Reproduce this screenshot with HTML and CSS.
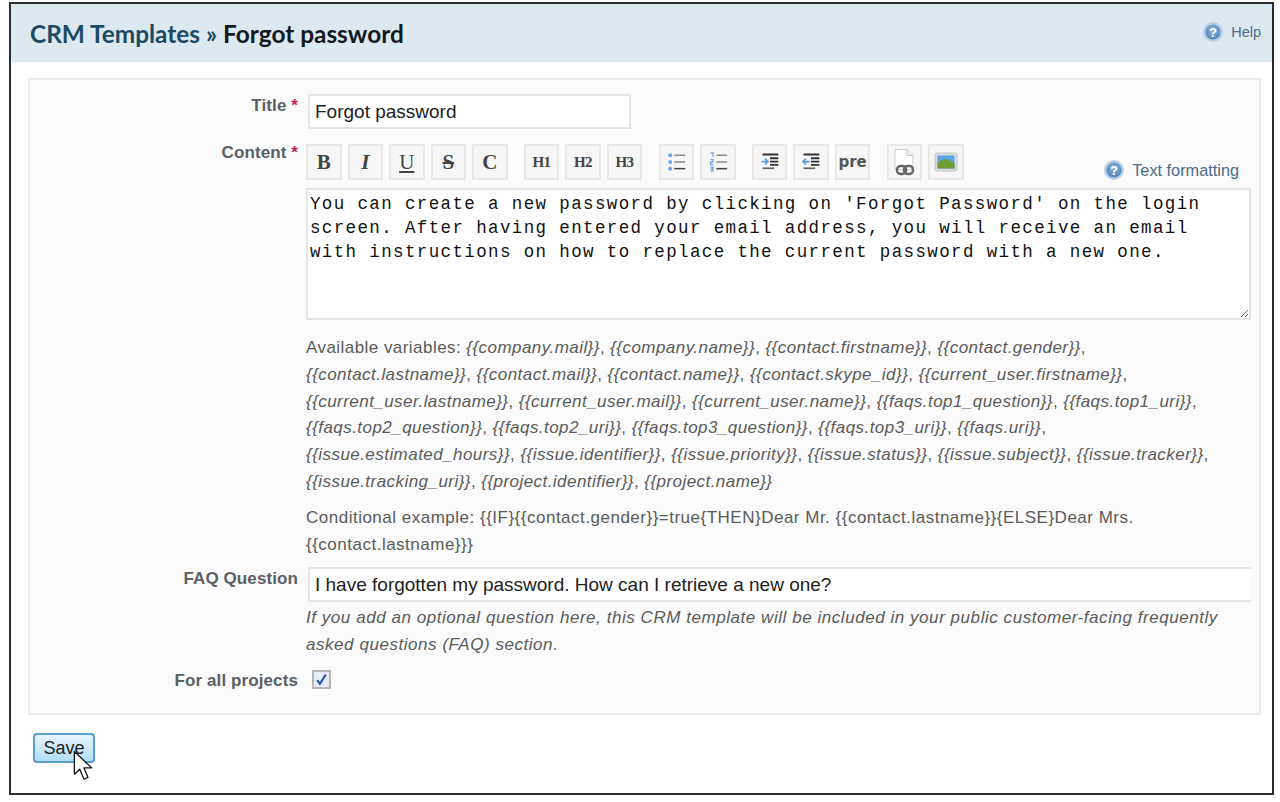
FILE: index.html
```html
<!DOCTYPE html>
<html lang="en">
<head>
<meta charset="utf-8">
<title>CRM Templates » Forgot password</title>
<link rel="stylesheet" href="styles.css">
</head>
<body>
<div class="frame">
  <header class="header">
    <h1 class="title"><a class="crumb">CRM Templates</a> <span class="crumb">»</span> Forgot password</h1>
    <a class="help-link help-top">
      <svg class="help-icon" viewBox="0 0 22 22"><defs><radialGradient id="hg" cx="50%" cy="40%" r="60%"><stop offset="0" stop-color="#8fb6dc"/><stop offset="1" stop-color="#4f83b8"/></radialGradient></defs><circle cx="11" cy="11" r="10" fill="#b9cfe4"/><circle cx="11" cy="11" r="7.6" fill="url(#hg)"/><text x="11" y="15.5" text-anchor="middle" class="help-q">?</text></svg>
      <span>Help</span>
    </a>
  </header>
  <form class="panel">
    <div class="row row-title">
      <label class="label">Title <span class="req">*</span></label>
      <div class="field"><input class="input input-title" type="text" value="Forgot password"></div>
    </div>
    <div class="row row-content">
      <label class="label label-content">Content <span class="req">*</span></label>
      <div class="field">
        <div class="toolbar">
          <div class="group">
            <span class="tb tb-b">B</span><span class="tb tb-i">I</span><span class="tb tb-u">U</span><span class="tb tb-s">S</span><span class="tb tb-c">C</span>
          </div>
          <div class="group">
            <span class="tb tb-h">H1</span><span class="tb tb-h">H2</span><span class="tb tb-h">H3</span>
          </div>
          <div class="group">
            <span class="tb"><svg class="ico" viewBox="0 0 24 24"><g fill="#6aa4e4"><circle cx="5" cy="4" r="2.4"/><circle cx="5" cy="12" r="2.4"/><circle cx="5" cy="20" r="2.4"/></g><path d="M10 4h13M10 12h13" stroke="#8a8a8a" stroke-width="1.8"/><path d="M10 20h13" stroke="#444" stroke-width="1.8"/></svg></span>
            <span class="tb"><svg class="ico" viewBox="0 0 24 24"><path d="M3 1h3v5M3 9h3v3h-3v3h3M3 18h3v5h-3M3 20.500h3" stroke="#6aa4e4" stroke-width="1.500" fill="none"/><path d="M10 4h13M10 12h13" stroke="#8a8a8a" stroke-width="1.8"/><path d="M10 20h13" stroke="#444" stroke-width="1.8"/></svg></span>
          </div>
          <div class="group">
            <span class="tb"><svg class="ico" viewBox="0 0 24 24"><path d="M3 3h19M12 7.500h10M12 11.500h10M12 15.500h10" stroke="#333" stroke-width="2.200"/><path d="M3 19.500h14" stroke="#666" stroke-width="2"/><path d="M2 11.500h7M6 8l3.500 3.500L6 15" stroke="#5b9ee6" stroke-width="2" fill="none"/></svg></span>
            <span class="tb"><svg class="ico" viewBox="0 0 24 24"><path d="M3 3h19M12 7.500h10M12 11.500h10M12 15.500h10" stroke="#333" stroke-width="2.200"/><path d="M3 19.500h14" stroke="#666" stroke-width="2"/><path d="M3.500 11.500h7M6 8l-3.500 3.500L6 15" stroke="#5b9ee6" stroke-width="2" fill="none"/></svg></span>
            <span class="tb tb-pre">pre</span>
          </div>
          <div class="group">
            <span class="tb"><svg class="ico ico-lg" viewBox="0 0 28 28"><path d="M5 1.500h12l6 6v14H5z" fill="#fff" stroke="#c9c9c9"/><path d="M17 1.500v6h6" fill="#eee" stroke="#c9c9c9"/><rect x="7" y="18" width="9" height="8" rx="3.500" fill="none" stroke="#666" stroke-width="2.400"/><rect x="14" y="18" width="9" height="8" rx="3.500" fill="none" stroke="#666" stroke-width="2.400"/></svg></span>
            <span class="tb"><svg class="ico ico-lg" viewBox="0 0 28 28"><rect x="3" y="5" width="22" height="18" rx="2" fill="#dcdcdc" stroke="#c4c4c4"/><rect x="5.500" y="7.500" width="17" height="13" fill="#5aa6e6"/><path d="M5.500 20.500v-6c4-3 7-4 10-3s5 2 7 4v5z" fill="#6d9e35"/></svg></span>
          </div>
          <a class="help-link help-format">
            <svg class="help-icon" viewBox="0 0 22 22"><circle cx="11" cy="11" r="10" fill="#b9cfe4"/><circle cx="11" cy="11" r="7.6" fill="url(#hg)"/><text x="11" y="15.5" text-anchor="middle" class="help-q">?</text></svg>
            <span>Text formatting</span>
          </a>
        </div>
        <textarea class="textarea" spellcheck="false">You can create a new password by clicking on 'Forgot Password' on the login screen. After having entered your email address, you will receive an email with instructions on how to replace the current password with a new one.</textarea>
        <p class="note note-vars">Available variables: <em>{{company.mail}}</em>, <em>{{company.name}}</em>, <em>{{contact.firstname}}</em>, <em>{{contact.gender}}</em>, <em>{{contact.lastname}}</em>, <em>{{contact.mail}}</em>, <em>{{contact.name}}</em>, <em>{{contact.skype_id}}</em>, <em>{{current_user.firstname}}</em>, <em>{{current_user.lastname}}</em>, <em>{{current_user.mail}}</em>, <em>{{current_user.name}}</em>, <em>{{faqs.top1_question}}</em>, <em>{{faqs.top1_uri}}</em>, <em>{{faqs.top2_question}}</em>, <em>{{faqs.top2_uri}}</em>, <em>{{faqs.top3_question}}</em>, <em>{{faqs.top3_uri}}</em>, <em>{{faqs.uri}}</em>, <em>{{issue.estimated_hours}}</em>, <em>{{issue.identifier}}</em>, <em>{{issue.priority}}</em>, <em>{{issue.status}}</em>, <em>{{issue.subject}}</em>, <em>{{issue.tracker}}</em>, <em>{{issue.tracking_uri}}</em>, <em>{{project.identifier}}</em>, <em>{{project.name}}</em></p>
        <p class="note note-cond">Conditional example: {{IF}{{contact.gender}}=true{THEN}Dear Mr. {{contact.lastname}}{ELSE}Dear Mrs. {{contact.lastname}}}</p>
      </div>
    </div>
    <div class="row row-faq">
      <label class="label">FAQ Question</label>
      <div class="field">
        <input class="input input-faq" type="text" value="I have forgotten my password. How can I retrieve a new one?">
        <p class="note note-faq"><em>If you add an optional question here, this CRM template will be included in your public customer-facing frequently asked questions (FAQ) section.</em></p>
      </div>
    </div>
    <div class="row row-all">
      <label class="label">For all projects</label>
      <div class="field">
        <span class="check"><svg viewBox="0 0 14 14"><path d="M3 7.500l2.500 3.500L11 2.500" fill="none" stroke="#2f55b5" stroke-width="2"/></svg></span>
      </div>
    </div>
  </form>
  <div class="actions">
    <button class="save" type="button">Save</button>
    <svg class="cursor" viewBox="0 0 22 36"><path d="M1.500 1.500v25l6-5.500 4.500 11 4.500-2-4.500-10.500h8.500z" fill="#fff" stroke="#111" stroke-width="1.400" stroke-linejoin="round"/></svg>
  </div>
</div>
</body>
</html>
```
FILE: styles.css
```css
* { box-sizing: border-box; }
html, body { margin: 0; padding: 0; background: #fff; }
body { padding: 2px 6px 0 9px; font-family: "Liberation Sans", Arial, sans-serif; color: #505050; height: 802px; overflow: hidden; }
.frame { width: 1265px; height: 793px; border: 2px solid #2e2e2e; background: #fff; }
.header { height: 58px; background: #dce9f1; display: flex; justify-content: space-between; align-items: center; padding: 0 11px 0 19px; }
.title { margin: 0; font-family: Lato, "Open Sans", sans-serif; font-weight: 700; font-size: 24.400px; color: #141a20; }
.crumb { color: #1c4a63; }
.help-link { display: flex; align-items: center; gap: 7px; color: #4b6c8a; }
.help-icon { width: 22px; height: 22px; flex: none; }
.help-q { font: 700 13px "Liberation Sans", sans-serif; fill: #fff; }
.help-top { font-size: 14.500px; margin-top: -3px; }
.help-format { font-size: 16.300px; margin-left: auto; margin-right: 20px; margin-top: 15px; }
.panel { margin: 16px 11px 0 17px; height: 637px; border: 2px solid #ebebeb; background: #fbfbfb; padding-top: 14px; }
.row { display: grid; grid-template-columns: 268px 1fr; column-gap: 8px; }
.label { text-align: right; font-weight: 700; font-size: 17px; letter-spacing: 0.1px; color: #5a5f66; line-height: 24px; white-space: nowrap; }
.req { color: #c2185b; }
.row-title { height: 50px; }
.label-content { margin-top: -3px; }
.input { display: block; height: 35px; border: 2px solid #e6e6e6; background: #fff; font-family: "Liberation Sans", sans-serif; font-size: 19px; color: #222; padding: 0 5px; outline: none; }
.input-title { width: 323px; margin-left: 2px; }
.toolbar { display: flex; height: 44px; align-items: flex-start; }
.group { display: flex; gap: 6px; margin-right: 16.300px; }
.tb { width: 35.500px; height: 36px; border: 2px solid #e8e8e8; background: #f6f6f6; display: flex; align-items: center; justify-content: center; font-family: "Liberation Serif", serif; font-weight: 700; color: #444; font-size: 21px; }
.tb-i { font-style: italic; }
.tb-u { text-decoration: underline; font-weight: 400; }
.tb-s { text-decoration: line-through; }
.tb-h { font-size: 15px; letter-spacing: -0.5px; }
.tb-pre { font-family: "DejaVu Sans", sans-serif; font-size: 15px; color: #555; }
.ico { width: 20px; height: 20px; }
.ico-lg { width: 28px; height: 28px; }
.textarea { display: block; width: 945px; height: 132px; border: 2px solid #e4e4e4; background: #fff; font-family: "Liberation Mono", monospace; font-size: 17.500px; letter-spacing: 1.370px; line-height: 24px; color: #111; padding: 2px 2px; margin: 0; outline: none; overflow: hidden; resize: vertical; }
.note { margin: 0; font-size: 17px; letter-spacing: 0.450px; line-height: 26.800px; color: #5a5a5a; width: 945px; }
.note-vars { margin-top: 15px; }
.note-cond { margin-top: 9px; letter-spacing: 0.500px; }
.row-faq { margin-top: 9px; }
.input-faq { width: 943px; margin-left: 2px; border-width: 2px 0 2px 2px; }
.note-faq { margin-top: 2.500px; letter-spacing: 0.550px; }
.row-all { margin-top: 9.500px; }
.row-all .label { padding-top: 1px; }
.check { display: block; width: 19px; height: 19px; margin: 2px 0 0 6px; border: 2px solid #b5b5b5; background: #e9edf7; }
.check svg { display: block; width: 15px; height: 15px; }
.actions { position: relative; padding: 18px 0 0 22px; }
.save { display: block; width: 62px; height: 30px; padding: 0; border: 2px solid #5b9fce; border-radius: 4px; background: linear-gradient(#e6f4fc, #b3defa); font-family: "Liberation Sans", sans-serif; font-size: 18px; color: #222; }
.cursor { position: absolute; left: 62px; top: 35px; width: 20px; height: 33px; }
```
